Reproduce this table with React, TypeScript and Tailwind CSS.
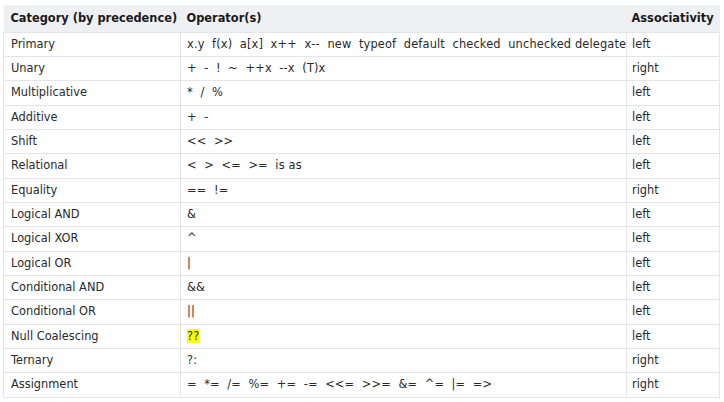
import React from 'react';

type Row = { cat: string; ops: React.ReactNode; assoc: string };

const rows: Row[] = [
    { cat: 'Primary', ops: 'x.y  f(x)  a[x]  x++  x--  new  typeof  default  checked  unchecked delegate', assoc: 'left' },
    { cat: 'Unary', ops: '+  -  !  ~  ++x  --x  (T)x', assoc: 'right' },
    { cat: 'Multiplicative', ops: '*  /  %', assoc: 'left' },
    { cat: 'Additive', ops: '+  -', assoc: 'left' },
    { cat: 'Shift', ops: '<<  >>', assoc: 'left' },
    { cat: 'Relational', ops: '<  >  <=  >=  is as', assoc: 'left' },
    { cat: 'Equality', ops: '==  !=', assoc: 'right' },
    { cat: 'Logical AND', ops: '&', assoc: 'left' },
    { cat: 'Logical XOR', ops: '^', assoc: 'left' },
    { cat: 'Logical OR', ops: '|', assoc: 'left' },
    { cat: 'Conditional AND', ops: '&&', assoc: 'left' },
    { cat: 'Conditional OR', ops: '||', assoc: 'left' },
    { cat: 'Null Coalescing', ops: <span className="bg-[#ffff00]">??</span>, assoc: 'left' },
    { cat: 'Ternary', ops: '?:', assoc: 'right' },
    { cat: 'Assignment', ops: '=  *=  /=  %=  +=  -=  <<=  >>=  &=  ^=  |=  =>', assoc: 'right' },
];

export default function App() {
    return (
        <div className="w-[724px] h-[402px] bg-white pt-[5px] pl-[3px] font-['DejaVu_Sans',Verdana,sans-serif] text-[11.4px] text-[#2a2a2a]">
            <table className="w-[716px] border-collapse table-fixed">
                <colgroup>
                    <col className="w-[177px]" />
                    <col className="w-[446px]" />
                    <col className="w-[93px]" />
                </colgroup>
                <thead>
                    <tr className="h-[27px] bg-[#eef0f3]">
                        <th className="text-left font-bold pl-[7px] pr-0 text-[#1a1a1a] whitespace-nowrap">Category (by precedence)</th>
                        <th className="text-left font-bold px-[6px] text-[#1a1a1a]">Operator(s)</th>
                        <th className="text-left font-bold pl-[5px] pr-0 text-[#1a1a1a] whitespace-nowrap">Associativity</th>
                    </tr>
                </thead>
                <tbody>
                    {rows.map((r) => (
                        <tr key={r.cat} className="h-[24.35px] border border-[#e3e5e8]">
                            <td className="px-[7px] border border-[#e3e5e8]">{r.cat}</td>
                            <td className="px-[6px] border border-[#e3e5e8] whitespace-pre tracking-[0.15px] text-[#2a2a2a]">{r.ops}</td>
                            <td className="px-[5px] border border-[#e3e5e8]">{r.assoc}</td>
                        </tr>
                    ))}
                </tbody>
            </table>
        </div>
    );
}
